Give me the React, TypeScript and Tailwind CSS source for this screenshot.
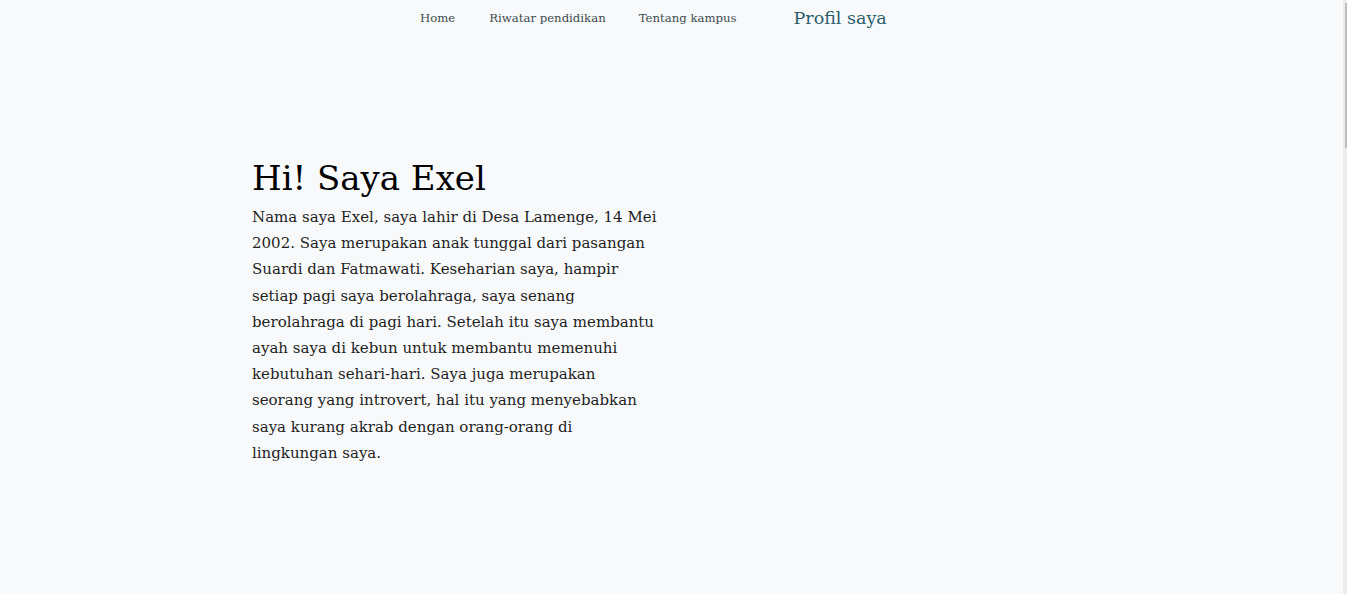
import React from "react";

export default function App() {
  return (
    <div className="min-h-[2380px] bg-[#f8f9fa] font-['DejaVu_Serif',serif]">
      {/* Navbar */}
      <nav className="flex items-center pl-[420px] h-9 pt-px">
        <a className="text-[11.7px] text-[#3d4b50]">Home</a>
        <a className="ml-[34px] text-[11.7px] text-[#3d4b50]">Riwatar pendidikan</a>
        <a className="ml-[33px] text-[11.7px] text-[#3d4b50]">Tentang kampus</a>
        <a className="ml-[57px] text-[17.5px] text-[#2b5d6b]">Profil saya</a>
      </nav>

      {/* Hero */}
      <section className="pl-[252px] pt-[118px]">
        <div className="w-[406px]">
          <h1 className="text-[34px] leading-[48px] text-black">Hi! Saya Exel</h1>
          <p className="text-[15px] leading-[26.2px] text-[#1f1f1f] mt-[2px]">
            Nama saya Exel, saya lahir di Desa Lamenge, 14 Mei 2002. Saya merupakan anak tunggal dari
            pasangan Suardi dan Fatmawati. Keseharian saya, hampir setiap pagi saya berolahraga, saya
            senang berolahraga di pagi hari. Setelah itu saya membantu ayah saya di kebun untuk membantu
            memenuhi kebutuhan sehari-hari. Saya juga merupakan seorang yang introvert, hal itu yang
            menyebabkan saya kurang akrab dengan orang-orang di lingkungan saya.
          </p>
        </div>
      </section>

      {/* scrollbar look */}
      <div className="fixed right-0 top-0 h-full w-[4px] bg-[#ececec]">
        <div className="mt-[3px] ml-[2px] h-[145px] w-[2px] bg-[#bdbdbd]" />
      </div>
    </div>
  );
}
